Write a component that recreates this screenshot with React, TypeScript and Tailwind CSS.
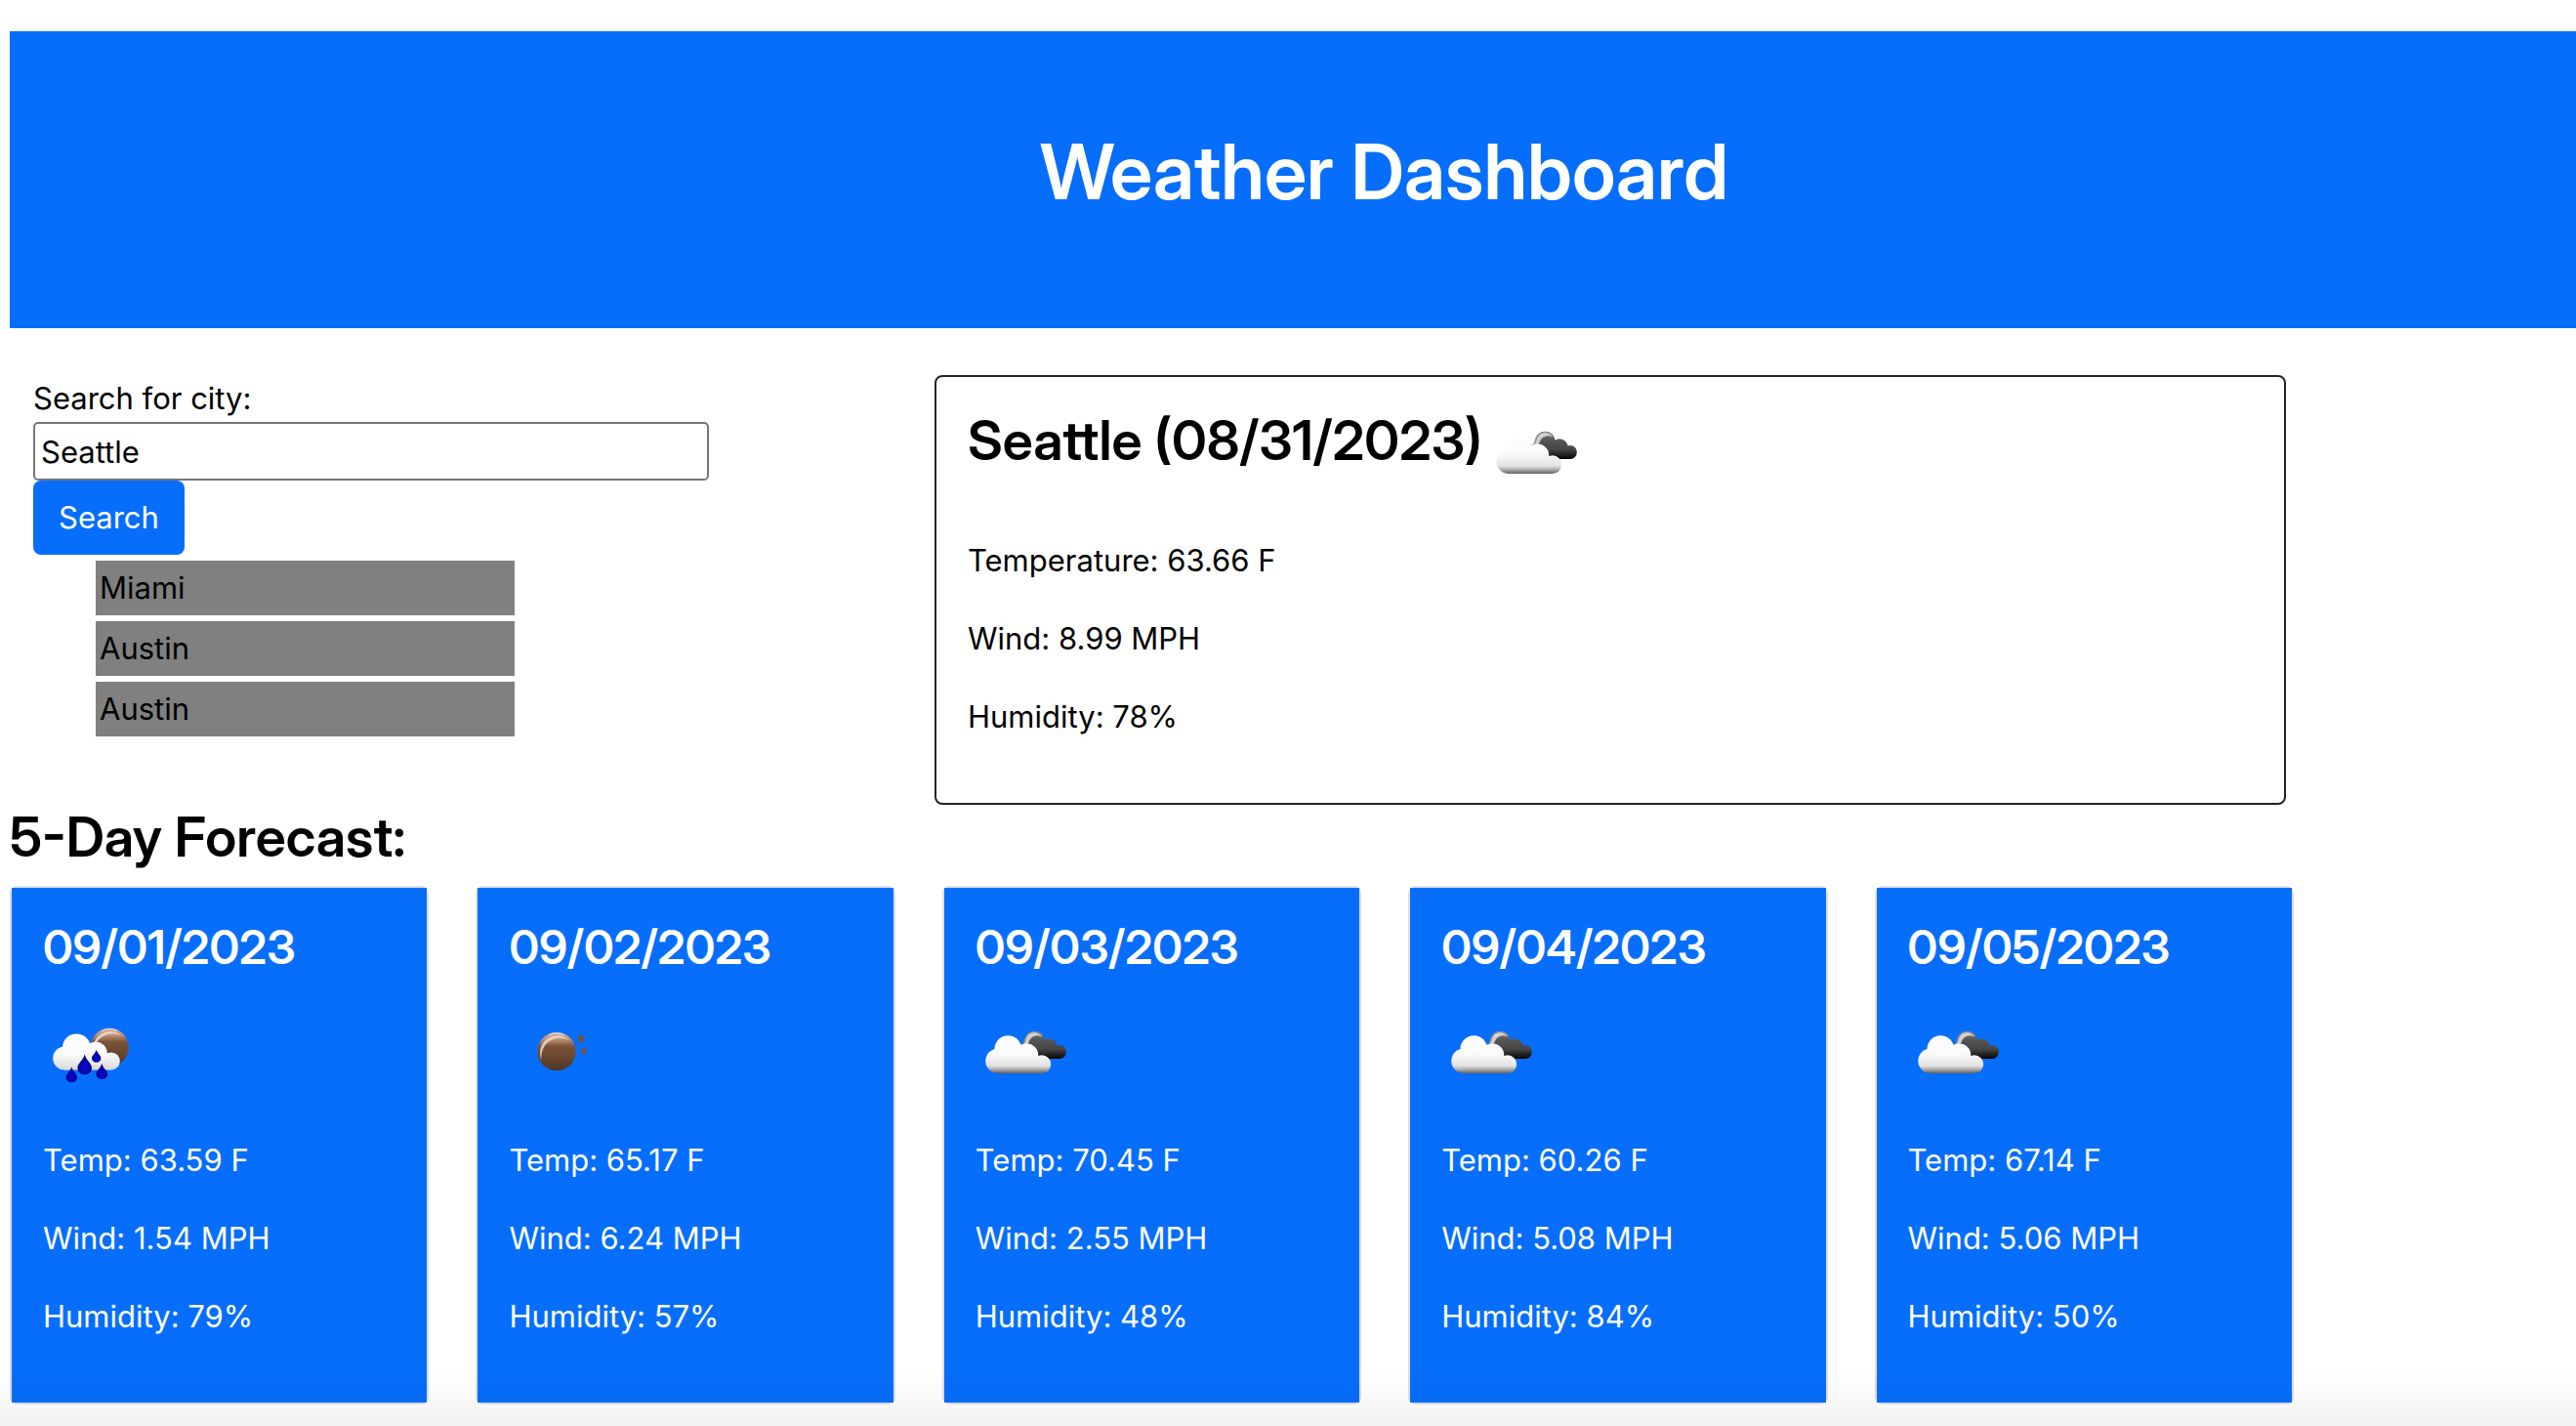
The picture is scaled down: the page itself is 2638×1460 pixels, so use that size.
import React, { useId, useState } from "react";

type IconKind = "clouds" | "rain" | "clear";

interface Forecast {
  date: string;
  icon: IconKind;
  temp: string;
  wind: string;
  humidity: string;
}

const forecasts: Forecast[] = [
  { date: "09/01/2023", icon: "rain", temp: "63.59", wind: "1.54", humidity: "79" },
  { date: "09/02/2023", icon: "clear", temp: "65.17", wind: "6.24", humidity: "57" },
  { date: "09/03/2023", icon: "clouds", temp: "70.45", wind: "2.55", humidity: "48" },
  { date: "09/04/2023", icon: "clouds", temp: "60.26", wind: "5.08", humidity: "84" },
  { date: "09/05/2023", icon: "clouds", temp: "67.14", wind: "5.06", humidity: "50" },
];

const history = ["Miami", "Austin", "Austin"];

function Moon({ cx, cy, id }: { cx: number; cy: number; id: string }) {
  return (
    <g transform={`translate(${cx} ${cy})`}>
      <defs>
        <linearGradient id={id} x1="0" y1="0" x2="0" y2="1">
          <stop offset="0" stopColor="#cfae98" />
          <stop offset="0.17" stopColor="#c29478" />
          <stop offset="0.36" stopColor="#7a5238" />
          <stop offset="0.7" stopColor="#64452f" />
          <stop offset="1" stopColor="#4c3423" />
        </linearGradient>
      </defs>
      <circle r="19.6" fill={`url(#${id})`} />
      <path
        d="M-15.5 8.5C-19.5-2-14.5-15 0-16.4C5-16.6 9.5-14.6 12-12C8-14 4-14.3 0-13.8C-10.5-12-16.6-3-15.5 8.5Z"
        fill="#eadbd0"
        opacity="0.85"
      />
      <path d="M-8-17A19 19 0 0 1 8-17" fill="none" stroke="#f0e4dc" strokeWidth="1.6" opacity="0.6" />
    </g>
  );
}

function Drop({ x, top, h, w, id }: { x: number; top: number; h: number; w: number; id: string }) {
  return (
    <g transform={`translate(${x} ${top}) scale(${w} ${h})`}>
      <path
        d="M0 0C.12 .28 1 .45 1 .68C1 .88 .55 1 0 1C-.55 1-1 .88-1 .68C-1 .45-.12 .28 0 0Z"
        fill={`url(#${id})`}
      />
    </g>
  );
}

function WeatherIcon({ kind }: { kind: IconKind }) {
  const uid = useId().replace(/[^a-zA-Z0-9]/g, "");
  const moon = `${uid}moon`;
  const front = `${uid}front`;
  const back = `${uid}back`;
  const drop = `${uid}drop`;

  return (
    <svg viewBox="0 0 100 100" className="h-[100px] w-[100px] shrink-0" aria-hidden="true">
      <defs>
        <linearGradient id={front} gradientUnits="userSpaceOnUse" x1="0" y1="34" x2="0" y2="73">
          <stop offset="0" stopColor="#ffffff" />
          <stop offset="0.5" stopColor="#fafafa" />
          <stop offset="0.8" stopColor="#e2e2e2" />
          <stop offset="0.9" stopColor={kind === "rain" ? "#d5d5d5" : "#a8a8a8"} />
          <stop offset="1" stopColor={kind === "rain" ? "#a0a0a0" : "#606060"} />
        </linearGradient>
        <linearGradient id={back} gradientUnits="userSpaceOnUse" x1="0" y1="30" x2="0" y2="58">
          <stop offset="0" stopColor="#7c7c7c" />
          <stop offset="0.3" stopColor="#575757" />
          <stop offset="0.65" stopColor="#454545" />
          <stop offset="0.88" stopColor="#1a1a1a" />
          <stop offset="1" stopColor="#000000" />
        </linearGradient>
        <radialGradient id={drop} cx="0.5" cy="0.65" r="0.6">
          <stop offset="0" stopColor="#0a0ad8" />
          <stop offset="0.45" stopColor="#0606b4" />
          <stop offset="1" stopColor="#020266" />
        </radialGradient>
      </defs>

      {kind === "clouds" && (
        <>
          <g fill={`url(#${back})`}>
            <circle cx="60.3" cy="40.6" r="10.6" />
            <circle cx="75" cy="45.8" r="8.6" />
            <circle cx="86" cy="51" r="6.9" />
            <path d="M55 40H76L86 48V57.9H58Z" />
          </g>
          <path
            d="M49.6 44.4C49 36.5 53.6 31 60 31C63.4 31 66.2 32.6 68.2 35.4C61.6 32.2 55.2 35 53.6 44.6Z"
            fill="#dcdcdc"
            opacity="0.9"
          />
          <path
            d="M46 44C49 43.6 50 42 50.6 39.4C52 33.4 56 30.4 60.3 30.4C63.6 30.4 66.6 32 68.6 34.6"
            fill="none"
            stroke="#8a8a8a"
            strokeWidth="1.3"
          />
          <g fill={`url(#${front})`}>
            <circle cx="23" cy="60.3" r="12.7" />
            <circle cx="33.3" cy="48.1" r="13.8" />
            <circle cx="52.4" cy="54.4" r="11.9" />
            <circle cx="67.8" cy="63.6" r="9.4" />
            <path d="M23 50H52L64 56L67.8 60V73H23Z" />
          </g>
        </>
      )}

      {kind === "rain" && (
        <>
          <Moon cx={68.2} cy={46.4} id={moon} />
          <g fill={`url(#${front})`}>
            <circle cx="22.2" cy="57.4" r="12" />
            <circle cx="34.3" cy="46.7" r="14.3" />
            <circle cx="54" cy="52.6" r="11.9" />
            <circle cx="69.8" cy="60.4" r="9" />
            <path d="M22 46H54L66 54L69.8 58V69.4H22Z" />
          </g>
          <Drop x={42.7} top={53.3} h={20.7} w={7.3} id={drop} />
          <Drop x={54.7} top={48.6} h={13.2} w={4.7} id={drop} />
          <Drop x={29.3} top={66} h={16.3} w={5.7} id={drop} />
          <Drop x={60.3} top={62.8} h={16.2} w={5.7} id={drop} />
        </>
      )}

      {kind === "clear" && (
        <>
          <Moon cx={49} cy={50.7} id={moon} />
          <g fill="#74513f">
            <path d="M74 31.8L75.4 35.4L79.2 35.6L76.2 38L77.2 41.8L74 39.7L70.8 41.8L71.8 38L68.8 35.6L72.6 35.4Z" />
            <path d="M77 45.2L78.2 48.3L81.5 48.5L78.9 50.6L79.8 53.9L77 52L74.2 53.9L75.1 50.6L72.5 48.5L75.8 48.3Z" />
          </g>
        </>
      )}
    </svg>
  );
}

function ForecastCard({ date, icon, temp, wind, humidity }: Forecast) {
  return (
    <article className="rounded-lg border-2 border-[#dedfe0] text-white">
      <div className="bg-[#076efb] p-8">
        <h3 className="font-['Inter_Display','Inter',sans-serif] text-[48px] leading-[58px] font-semibold">{date}</h3>
        <div className="mt-[27px] mb-[38px] flex">
          <WeatherIcon kind={icon} />
        </div>
        <p className="mb-8">Temp: {temp} F</p>
        <p className="mb-8">Wind: {wind} MPH</p>
        <p className="mb-8">Humidity: {humidity}%</p>
      </div>
    </article>
  );
}

export default function App() {
  const [city, setCity] = useState("Seattle");

  return (
    <div className="overflow-x-hidden bg-white pt-8 pl-[10px] font-['Inter',sans-serif] text-[31px] leading-[48px] text-black">
      <header className="bg-[#076efb] pt-24 pb-28 pl-[187px] text-center text-white">
        <h1 className="font-['Inter_Display','Inter',sans-serif] text-[78px] leading-[96px] font-semibold">
          Weather Dashboard
        </h1>
      </header>

      <main className="w-[89%]">
        <div className="mt-12 grid grid-cols-[947fr_1392fr]">
          <section className="pl-6">
            <div className="w-3/4">
              <form onSubmit={(e) => e.preventDefault()}>
                <label htmlFor="city" className="block">
                  Search for city:
                </label>
                <input
                  id="city"
                  type="text"
                  value={city}
                  onChange={(e) => setCity(e.target.value)}
                  className="block h-[60px] w-full rounded-[5px] border-2 border-[#767676] bg-white px-1.5 outline-none"
                />
                <button type="submit" className="block rounded-lg bg-[#076efb] px-[26px] py-3.5 text-white">
                  Search
                </button>
              </form>
              <ul className="mt-1.5 ml-16 flex w-[62%] flex-col gap-1.5">
                {history.map((name, i) => (
                  <li key={i} className="bg-[#808080] p-1">
                    {name}
                  </li>
                ))}
              </ul>
            </div>
          </section>

          <section className="mr-2 rounded-lg border-2 border-[#212529] p-8">
            <div className="mb-[65px] flex h-[67px] items-center gap-1">
              <h2 className="font-['Inter_Display','Inter',sans-serif] text-[56px] leading-[67px] font-semibold">
                Seattle (08/31/2023)
              </h2>
              <div className="pt-5">
                <WeatherIcon kind="clouds" />
              </div>
            </div>
            <p className="mb-8">Temperature: 63.66 F</p>
            <p className="mb-8">Wind: 8.99 MPH</p>
            <p className="mb-8">Humidity: 78%</p>
          </section>
        </div>

        <h2 className="mb-4 font-['Inter_Display','Inter',sans-serif] text-[56px] leading-[67px] font-semibold">
          5-Day Forecast:
        </h2>
        <div className="grid grid-cols-5 gap-12 pb-6">
          {forecasts.map((f) => (
            <ForecastCard key={f.date} {...f} />
          ))}
        </div>
      </main>

      <div className="pointer-events-none fixed inset-x-0 bottom-0 h-14 bg-linear-to-b from-black/0 to-black/5" />
    </div>
  );
}
